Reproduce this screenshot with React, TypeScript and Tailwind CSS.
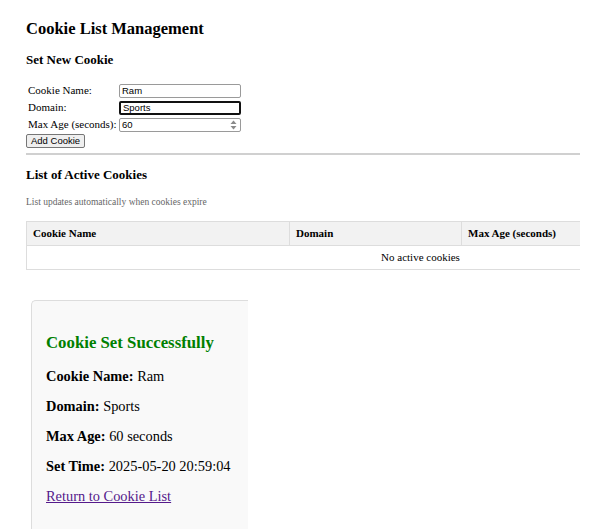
import React from "react";

function Spinner() {
  return (
    <svg width="7" height="10" viewBox="0 0 7 10" className="absolute right-[4px] top-[2px]">
      <path d="M3.5 0.5 L6.5 4 L0.5 4 Z" fill="#8a8a8a" />
      <path d="M0.5 6 L6.5 6 L3.5 9.5 Z" fill="#8a8a8a" />
    </svg>
  );
}

export default function App() {
  const field =
    "h-[14px] w-[122px] rounded-[2px] bg-white px-[2px] text-[9.5px] leading-[12px] font-['Liberation_Sans',Arial,sans-serif] text-black outline-none";

  return (
    <div className="min-h-[529px] overflow-hidden bg-white pl-[26px] pt-[19px] font-['Liberation_Serif','Times_New_Roman',serif] text-black">
      <h1 className="text-[16.5px] leading-[20px] font-bold">Cookie List Management</h1>

      <h2 className="mt-[13px] text-[13px] leading-[16px] font-bold">Set New Cookie</h2>

      <div className="mt-[14px] grid grid-cols-[91px_122px] auto-rows-[17px] items-center pl-[2px] text-[11px] leading-[13px]">
        <span>Cookie Name:</span>
        <input readOnly value="Ram" className={`${field} border border-[#9a9a9a]`} />
        <span>Domain:</span>
        <input readOnly value="Sports" className={`${field} border-2 border-[#111] px-[1px]`} />
        <span>Max Age (seconds):</span>
        <div className="relative h-[14px] w-[122px]">
          <input readOnly value="60" className={`${field} border border-[#9a9a9a]`} />
          <Spinner />
        </div>
      </div>

      <button className="mt-[1px] block h-[14px] rounded-[2px] border border-[#767676] bg-[#efefef] px-[4px] text-[9.5px] leading-[12px] font-['Liberation_Sans',Arial,sans-serif]">
        Add Cookie
      </button>

      <div className="mt-[5px] w-[554px] border-t-2 border-[#d0d0d0]" />

      <h2 className="mt-[12px] text-[13px] leading-[16px] font-bold">List of Active Cookies</h2>
      <p className="mt-[13px] text-[9.5px] leading-[12px] text-[#666]">
        List updates automatically when cookies expire
      </p>

      <div className="mt-[13px] w-[554px] overflow-hidden">
        <table className="w-[788px] table-fixed border-collapse text-[11px] leading-[13px]">
          <colgroup>
            <col className="w-[263px]" />
            <col className="w-[172px]" />
            <col className="w-[353px]" />
          </colgroup>
          <thead>
            <tr className="h-[24px] bg-[#f2f2f2]">
              <th className="border border-[#dddddd] px-[6px] text-left font-bold">Cookie Name</th>
              <th className="border border-[#dddddd] px-[6px] text-left font-bold">Domain</th>
              <th className="border border-[#dddddd] px-[6px] text-left font-bold">Max Age (seconds)</th>
            </tr>
          </thead>
          <tbody>
            <tr className="h-[24px]">
              <td colSpan={3} className="border border-[#dddddd] text-center">
                No active cookies
              </td>
            </tr>
          </tbody>
        </table>
      </div>

      <div className="ml-[5px] mt-[30px] h-[240px] w-[217px] rounded-tl-[5px] border-l border-t border-[#dddddd] bg-[#f9f9f9] pl-[14px] pt-[32px]">
        <h3 className="text-[16.8px] leading-[20px] font-bold text-[#008000]">Cookie Set Successfully</h3>
        <div className="mt-[14px] flex flex-col gap-[12px] text-[14.4px] leading-[18px]">
          <p>
            <b>Cookie Name:</b> Ram
          </p>
          <p>
            <b>Domain:</b> Sports
          </p>
          <p>
            <b>Max Age:</b> 60 seconds
          </p>
          <p>
            <b>Set Time:</b> 2025-05-20 20:59:04
          </p>
          <a href="#" className="text-[#551a8b] underline">
            Return to Cookie List
          </a>
        </div>
      </div>
    </div>
  );
}
